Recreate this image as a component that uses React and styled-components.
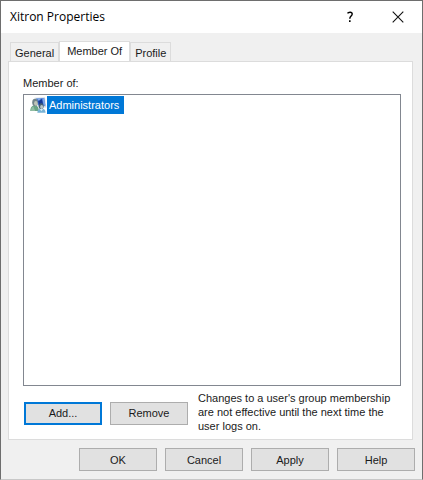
import React, { useState } from 'react';
import styled, { createGlobalStyle } from 'styled-components';

const GlobalStyle = createGlobalStyle`
  * {
    box-sizing: border-box;
  }
  body {
    margin: 0;
    background: #f0f0f0;
    color: #1a1a1a;
    font-family: "Liberation Sans", Arial, sans-serif;
    font-size: 11px;
    line-height: 14px;
  }
  button {
    font: inherit;
    color: inherit;
  }
`;

const Dialog = styled.main`
  display: flex;
  flex-direction: column;
  min-height: 100vh;
  border: 1px solid #6e6e6e;
  border-bottom-color: #c8c8c8;
`;

const TitleBar = styled.header`
  display: flex;
  align-items: center;
  height: 32px;
  padding-left: 9px;
  background: #ffffff;
`;

const Title = styled.h1`
  flex: 1;
  margin: 0;
  font-family: "Open Sans", "Noto Sans", sans-serif;
  font-size: 12px;
  font-weight: 400;
  line-height: 16px;
  color: #000000;
`;

const CaptionButton = styled.button`
  display: flex;
  align-items: center;
  justify-content: center;
  width: 48px;
  height: 32px;
  padding: 0;
  border: 0;
  background: transparent;
`;

const Content = styled.div`
  display: flex;
  flex: 1;
  flex-direction: column;
  padding: 8px 9px 8px 7px;
`;

const TabList = styled.div`
  display: flex;
  align-items: flex-end;
  padding-left: 2px;
`;

const Tab = styled.button`
  height: ${(props) => (props.$active ? '21px' : '19px')};
  margin-bottom: ${(props) => (props.$active ? '-1px' : '0')};
  padding: ${(props) => (props.$active ? '0 7px 2px' : '1px 4px 0')};
  border: 1px solid #dcdcdc;
  border-bottom: 0;
  background: ${(props) => (props.$active ? '#ffffff' : '#f0f0f0')};

  & + & {
    border-left-width: ${(props) => (props.$active ? '1px' : '0')};
  }
`;

const TabPanel = styled.section`
  display: flex;
  flex: 1;
  flex-direction: column;
  padding: 14px 11px 6px 14px;
  border: 1px solid #dcdcdc;
  background: #ffffff;
`;

const ListLabel = styled.span`
  margin-bottom: 4px;
`;

const GroupList = styled.ul`
  flex: 1;
  min-height: 120px;
  margin: 0;
  padding: 1px 6px;
  border: 1px solid #828790;
  list-style: none;
`;

const GroupItem = styled.li`
  display: flex;
  align-items: center;
  height: 18px;
`;

const GroupName = styled.span`
  padding: 2px 5px 2px 2px;
  background: ${(props) => (props.$selected ? '#0078d7' : 'transparent')};
  color: ${(props) => (props.$selected ? '#ffffff' : 'inherit')};
`;

const PanelActions = styled.div`
  display: flex;
  gap: 10px;
  align-items: center;
  padding: 5px 0 0 1px;
`;

const ActionButtons = styled.div`
  display: flex;
  gap: 8px;
  padding-top: 2px;
`;

const Note = styled.p`
  flex: 1;
  margin: 0;
`;

const Footer = styled.footer`
  display: flex;
  justify-content: flex-end;
  gap: 8px;
  padding-top: 8px;
  margin-right: -2px;
`;

const PushButton = styled.button`
  flex: none;
  width: 78px;
  height: 23px;
  padding: 0;
  border: ${(props) => (props.$primary ? '2px solid #0078d7' : '1px solid #adadad')};
  background: #e1e1e1;
`;

const HelpIcon = () => (
  <svg width="8" height="12" viewBox="0 0 8 12" fill="none" stroke="#000000">
    <path d="M1.5 2.4C2.3 1 6.2 .5 6.2 3.1C6.2 5.1 3.8 5.2 3.8 7.8" strokeWidth="1.4" />
    <path d="M3.8 9.2V11" strokeWidth="1.6" />
  </svg>
);

const CloseIcon = () => (
  <svg width="12" height="12" viewBox="0 0 12 12" fill="none" stroke="#111111">
    <path d="M.7 .7L11.3 11.3M11.3 .7L.7 11.3" strokeWidth="1.1" />
  </svg>
);

const GroupIcon = () => (
  <svg width="17" height="16" viewBox="0 0 17 16">
    <path d="M4.5 .8L15 .3L16.4 10.4L8 10.2Z" fill="#d3dce4" />
    <path d="M6 1.4L14.2 .9L15.4 8.8L8.5 8.8Z" fill="#4a7bd4" />
    <path d="M8.2 4.2L12 2L13 7.5L9 8.6Z" fill="#153997" />
    <path d="M7 1.6L11 1.3L9 3.6Z" fill="#8cb2ea" />
    <path d="M12.4 1.3L14.2 1.2L15.2 8L13.6 7.8Z" fill="#7fa9ea" />
    <path d="M.3 14C.2 10.5 2 8.5 4.8 8.5C7.6 8.5 9 10.5 8.8 14Z" fill="#69a384" />
    <path d="M1 13.9C1 11.2 2 9.8 3.4 9.4L5.2 13.9Z" fill="#92bea4" />
    <ellipse cx="5" cy="5.4" rx="2.8" ry="3.7" fill="#72858a" />
    <ellipse cx="5.8" cy="6.3" rx="1.7" ry="2.4" fill="#bec4b8" />
    <path d="M7.3 15.8C7.3 12.7 9 11.4 11.4 11.4C14 11.4 15.6 12.8 15.6 15.8Z" fill="#78b2d4" />
    <path d="M9.5 11.7L11.5 14.2L13.2 11.7Z" fill="#d8edf3" />
    <ellipse cx="11.2" cy="9.2" rx="2.4" ry="2.9" fill="#476071" />
    <ellipse cx="11.6" cy="10" rx="1.5" ry="1.9" fill="#b9c8c9" />
  </svg>
);

const tabs = ['General', 'Member Of', 'Profile'];
const footerButtons = ['OK', 'Cancel', 'Apply', 'Help'];

const App = () => {
  const [activeTab, setActiveTab] = useState('Member Of');

  return (
    <>
      <GlobalStyle />
      <Dialog>
        <TitleBar>
          <Title>Xitron Properties</Title>
          <CaptionButton type="button" aria-label="Context help">
            <HelpIcon />
          </CaptionButton>
          <CaptionButton type="button" aria-label="Close">
            <CloseIcon />
          </CaptionButton>
        </TitleBar>
        <Content>
          <TabList role="tablist">
            {tabs.map((tab) => (
              <Tab
                key={tab}
                type="button"
                role="tab"
                aria-selected={tab === activeTab}
                $active={tab === activeTab}
                onClick={() => setActiveTab(tab)}
              >
                {tab}
              </Tab>
            ))}
          </TabList>
          <TabPanel role="tabpanel">
            <ListLabel id="member-of-label">Member of:</ListLabel>
            <GroupList role="listbox" aria-labelledby="member-of-label">
              <GroupItem role="option" aria-selected="true">
                <GroupIcon />
                <GroupName $selected>Administrators</GroupName>
              </GroupItem>
            </GroupList>
            <PanelActions>
              <ActionButtons>
                <PushButton type="button" $primary>
                  Add...
                </PushButton>
                <PushButton type="button">Remove</PushButton>
              </ActionButtons>
              <Note>
                Changes to a user&apos;s group membership are not effective
                until the next time the user logs on.
              </Note>
            </PanelActions>
          </TabPanel>
          <Footer>
            {footerButtons.map((label) => (
              <PushButton key={label} type="button">
                {label}
              </PushButton>
            ))}
          </Footer>
        </Content>
      </Dialog>
    </>
  );
};

export default App;
